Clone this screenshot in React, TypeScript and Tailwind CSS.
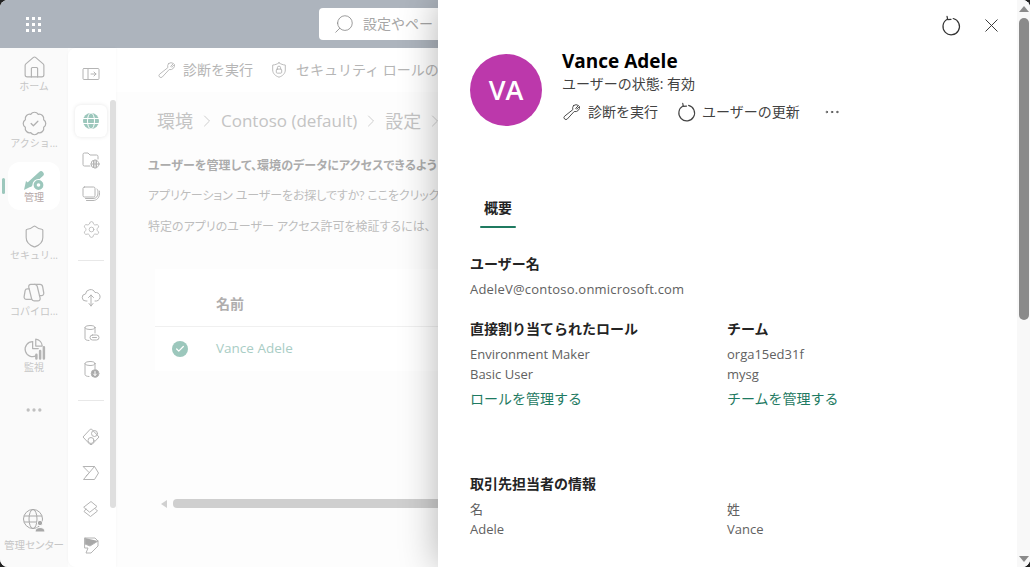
import React from 'react';
import { Home, BadgeCheck, Shield, Settings, X, Search, ChevronRight, Check, MoreHorizontal } from 'lucide-react';

const FONT = "font-['Open_Sans','Noto_Sans_CJK_JP',sans-serif]";

// small inline icons for the ones lucide has no match for
const Svg = ({ size = 20, color = '#b4b4b4', children }: { size?: number; color?: string; children: React.ReactNode }) => (
  <svg width={size} height={size} viewBox="0 0 20 20" fill="none" stroke={color} strokeWidth="1" strokeLinecap="round" strokeLinejoin="round">
    {children}
  </svg>
);

const Refresh = ({ color = '#333', size = 20 }: { color?: string; size?: number }) => (
  <Svg size={size} color={color}>
    <path d="M12 3.2A7.500 7.500 0 1 1 6.600 3.900" strokeWidth="1.100" />
    <path d="M6.400 1.200 7 4.200 10 3.900" strokeWidth="1.100" />
  </Svg>
);

const Key = ({ color = '#444', size = 20 }: { color?: string; size?: number }) => (
  <Svg size={size} color={color}>
    <path d="M12.200 2.600a4.600 4.600 0 0 1 5.200 0l-3 3 1 1 3-3a4.600 4.600 0 0 1-5.600 5.400L5.600 16.800a2 2 0 0 1-2.900-2.900L11.400 7a4.600 4.600 0 0 1 .8-4.400z" />
  </Svg>
);

const Sub = ({ children, cls = 'h-9' }: { children: React.ReactNode; cls?: string }) => (
  <div className={`flex items-center justify-center w-full ${cls}`}>{children}</div>
);

const RailLabel = ({ children }: { children: React.ReactNode }) => (
  <span className="text-[10px] leading-3 text-[#c6c6c6] whitespace-nowrap">{children}</span>
);

const FieldHead = ({ children }: { children: React.ReactNode }) => (
  <div className="h-5 text-sm leading-5 font-semibold text-[#242424]">{children}</div>
);

const Value = ({ children }: { children: React.ReactNode }) => (
  <div className="h-5 text-[13px] leading-5 text-[#616161]">{children}</div>
);

export default function App() {
  return (
    <div className={`w-[1030px] h-[567px] bg-[#222] ${FONT}`}>
      <div className="relative w-full h-full rounded-lg overflow-hidden flex flex-col bg-[#fdfdfd]">
        {/* top bar */}
        <header className="h-12 shrink-0 bg-[#adb4bd] flex items-center pl-[26px]">
          <div className="grid grid-cols-3 gap-[3px]">
            {Array.from({ length: 9 }).map((_, i) => (
              <span key={i} className="w-[3px] h-[3px] bg-white" />
            ))}
          </div>
          <div className="ml-[278px] w-[200px] h-8 bg-white rounded flex items-center pl-[14px] gap-[8px] text-sm text-[#a6a6a6] whitespace-nowrap">
            <Search size={22} strokeWidth={0.9} color="#888" className="-scale-x-100" />
            設定やペー
          </div>
        </header>

        <div className="flex-1 flex min-h-0">
          {/* left rail */}
          <nav className="w-[68px] shrink-0 bg-[#fafafa] flex flex-col items-center pt-[7px]">
            <div className="h-[55px] w-full flex flex-col items-center">
              <Home size={25} strokeWidth={1.100} color="#b0b0b0" />
              <RailLabel>ホーム</RailLabel>
            </div>
            <div className="h-[52px] w-full flex flex-col items-center">
              <BadgeCheck size={27} strokeWidth={1.100} color="#b0b0b0" />
              <RailLabel>アクショ...</RailLabel>
            </div>
            <div className="relative w-full flex justify-center mb-[14px]">
              <span className="absolute left-[2px] top-4 w-[3px] h-4 rounded bg-[#9cc7bc]" />
              <div className="w-[52px] h-12 rounded-xl bg-white flex flex-col items-center justify-center">
                <svg width="22" height="21" viewBox="0 0 22 21">
                  <path d="M18 4 7 14" stroke="#9cc7bc" strokeWidth="5.500" strokeLinecap="round" />
                  <path d="M1 20 3 11l6 5z" fill="#9cc7bc" />
                  <circle cx="15.500" cy="15" r="5.500" fill="#9cc7bc" stroke="#fff" strokeWidth="1.200" />
                  <circle cx="15.500" cy="15" r="1.800" fill="#fff" />
                </svg>
                <span className="text-[10px] leading-3 text-[#b5a8a8]">管理</span>
              </div>
            </div>
            <div className="h-[56px] w-full flex flex-col items-center">
              <Shield size={25} strokeWidth={1.100} color="#b0b0b0" />
              <RailLabel>セキュリ...</RailLabel>
            </div>
            <div className="h-[56px] w-full flex flex-col items-center">
              <Svg size={25}>
                <path d="M7 3.500h3.200c1 0 1.800.7 2 1.600l2.300 9.400c.3 1.200-.6 2.200-1.800 2.200h-3c-1 0-1.800-.7-2-1.600L5.400 5.700C5.200 4.500 5.900 3.500 7 3.500z" />
                <path d="M10 3.500h4.500c1 0 1.800.8 2 1.800l.9 5c.2 1.200-.7 2.200-1.900 2.200H14" />
                <path d="M5.600 7H4.200c-.9 0-1.500.6-1.700 1.500l-.8 4.800c-.2 1.200.7 2.200 1.900 2.200h4.200" />
              </Svg>
              <RailLabel>コパイロ...</RailLabel>
            </div>
            <div className="h-[56px] w-full flex flex-col items-center">
              <Svg size={25}>
                <path d="M8.500 4.500a6 6 0 1 0 3 11.200" />
                <path d="M11 2.500a6 6 0 0 1 5.200 5.500H11z" />
                <path d="M8.500 4.500V10H13" />
                <path d="M11.500 18v-3M14.500 18v-6M17.500 18V9" strokeWidth="2" />
              </Svg>
              <RailLabel>監視</RailLabel>
            </div>
            <MoreHorizontal size={20} strokeWidth={2} color="#c0c0c0" className="mt-[8px]" />
            <div className="mt-auto pb-[14px] flex flex-col items-center">
              <svg width="24" height="24" viewBox="0 0 24 24" fill="none" stroke="#a8a8a8" strokeWidth="1">
                <circle cx="11" cy="11" r="9.500" />
                <ellipse cx="11" cy="11" rx="4" ry="9.500" />
                <path d="M2 8h18M2 14h18" />
                <circle cx="18" cy="15" r="2.700" fill="#a8a8a8" stroke="#fafafa" />
                <path d="M13 24c0-3 2-4.500 5-4.500s5 1.500 5 4.500z" fill="#a8a8a8" stroke="#fafafa" />
              </svg>
              <span className="text-[10.500px] leading-4 mt-[5px] text-[#c6c6c6] whitespace-nowrap [font-feature-settings:'palt']">管理センター</span>
            </div>
          </nav>

          {/* second rail */}
          <aside className="relative w-12 shrink-0 bg-white rounded-l-lg pr-[2px] flex flex-col items-center pt-[8px] shadow-[0_0_3px_rgba(0,0,0,0.04)]">
            <span className="absolute right-0 top-[52px] bottom-[59px] w-[6px] rounded bg-[#dfdfdf]" />
            <Sub cls="h-9">
              <Svg size={20}>
                <rect x="2" y="4.500" width="16" height="11" rx="1" />
                <path d="M7 4.500v11M10 10h5M13 8l2 2-2 2" />
              </Svg>
            </Sub>
            <div className="mt-[13px] w-8 h-8 rounded-md bg-white shadow-[0_0_4px_rgba(0,0,0,0.1)] flex items-center justify-center">
              <svg width="18" height="18" viewBox="0 0 18 18" fill="none">
                <circle cx="9" cy="9" r="8" fill="#9cc7bc" />
                <ellipse cx="9" cy="9" rx="3.500" ry="8" stroke="#fff" />
                <path d="M1 6.500h16M1 11.500h16" stroke="#fff" />
              </svg>
            </div>
            <Sub cls="h-9 mt-[5px]">
              <Svg size={20}>
                <path d="M9 16H3.500A1.500 1.500 0 0 1 2 14.500v-10A1.500 1.500 0 0 1 3.500 3H7l2 2h6.500A1.500 1.500 0 0 1 17 6.500V9" />
                <circle cx="14" cy="14" r="4" />
                <path d="M10 14h8M14 10v8M12.500 10.500v7M15.500 10.500v7" />
              </Svg>
            </Sub>
            <Sub cls="h-[32px]">
              <Svg size={20}>
                <rect x="2" y="3" width="12" height="10" rx="1.500" />
                <path d="M16 5c.8 1 1 2 1 4 0 3-1.500 5.500-5 5.500H4.500" />
                <path d="M18.300 7c.3 1 .3 2 .2 3-.4 4-3 6.500-6.500 6.500H5.500" />
              </Svg>
            </Sub>
            <Sub cls="h-9 mt-[1px]">
              <Settings size={19} strokeWidth={1} color="#b4b4b4" />
            </Sub>
            <div className="w-[26px] h-px bg-[#e8e8e8] mt-[13px] mb-[18px]" />
            <Sub cls="h-9">
              <Svg size={20}>
                <path d="M6 14H5a3.500 3.500 0 0 1-.5-7A5 5 0 0 1 14 5.500a3.800 3.800 0 0 1 1.500 8.500H14" />
                <path d="M10 19V8M7.500 10.500 10 8l2.500 2.500M8 16.500l2 2.500 2-2.500" />
              </Svg>
            </Sub>
            <Sub cls="h-9">
              <Svg size={20}>
                <ellipse cx="9" cy="4.500" rx="5" ry="2" />
                <path d="M4 4.500v11c0 1 1.500 2 4 2M14 4.500V10" />
                <rect x="9" y="12" width="9" height="5" rx="2.500" />
                <path d="M11.500 14.500h4" />
              </Svg>
            </Sub>
            <Sub cls="h-9">
              <Svg size={20}>
                <ellipse cx="9" cy="4.500" rx="5" ry="2" />
                <path d="M4 4.500v11c0 1 1.500 2 4 2M14 4.500V10" />
                <circle cx="14" cy="14.500" r="3.800" fill="#a8a8a8" />
                <path d="M14 12.500v4M12.500 15l1.500 1.500 1.500-1.500" stroke="#fff" />
              </Svg>
            </Sub>
            <div className="w-[26px] h-px bg-[#e8e8e8] mt-[13px] mb-[18px]" />
            <Sub cls="h-9">
              <Svg size={20}>
                <path d="M9 2.500 2 10l7 7.500h2L18 10l-7-7.500z" />
                <circle cx="13.500" cy="6.500" r="3" />
                <circle cx="10" cy="13.500" r="3" />
              </Svg>
            </Sub>
            <Sub cls="h-9">
              <Svg size={20}>
                <path d="M2.500 3.500h11l4 6.500-4 6.500h-11L8 10z" />
                <path d="M13.500 3.500 8 10l-3 3" />
              </Svg>
            </Sub>
            <Sub cls="h-9">
              <Svg size={20}>
                <path d="M3 8l7-5.500 6 5-7 5.500z" />
                <path d="M5 10 3 12.500l6.500 5 7-5.500-2.500-2.500" />
              </Svg>
            </Sub>
            <Sub cls="h-9">
              <Svg size={20}>
                <path d="M4 3h10l3 3v5l-7 7H5l2-5H4z" />
                <path d="M4 3v6l5 2 8-5" fill="#a8a8a8" />
              </Svg>
            </Sub>
          </aside>

          {/* page behind the panel, its text stops where the panel starts */}
          <main className="flex-1 min-w-0 flex flex-col overflow-hidden whitespace-nowrap">
            <div className="h-[44px] shrink-0 bg-white flex items-center pl-[41px] text-sm text-[#b5b5b5]">
              <Key color="#b8b8b8" size={19} />
              <span className="ml-[7px]">診断を実行</span>
              <span className="ml-[17px]">
                <Svg size={18}>
                  <path d="M10 2c2 1.500 4.500 2.300 7 2.500V10c0 3.800-2.800 6.500-7 8-4.200-1.500-7-4.200-7-8V4.500C5.500 4.300 8 3.500 10 2z" />
                  <rect x="7" y="9" width="6" height="4.500" rx="1" />
                  <path d="M8.200 9V7.500a1.800 1.800 0 0 1 3.600 0V9" />
                </Svg>
              </span>
              <span className="ml-[8px]">セキュリティ ロールの</span>
            </div>
            <div className="mt-[16px] ml-[41px] h-[26px] flex items-center gap-[4px] text-[17px] text-[#c4c4c4]">
              <span className="text-[18px]">環境</span>
              <ChevronRight size={20} strokeWidth={1} />
              Contoso (default)
              <ChevronRight size={20} strokeWidth={1} />
              <span className="text-[18px]">設定</span>
              <ChevronRight size={20} strokeWidth={1} />
            </div>
            <div className="ml-[32px] mt-[22px] text-xs [font-feature-settings:'palt'] text-[#bdbdbd]">
              <div className="h-[30px] leading-[20px] font-semibold text-[#acacac] tracking-[0.1px]">ユーザーを管理して、環境のデータにアクセスできるよう</div>
              <div className="h-[31px] leading-[20px] tracking-[-0.1px]">アプリケーション ユーザーをお探しですか? ここをクリックし</div>
              <div className="h-[20px] leading-[20px]">特定のアプリのユーザー アクセス許可を検証するには、</div>
            </div>
            <div className="mt-[32px] ml-[39px] w-[400px] bg-white text-sm">
              <div className="h-[58px] border-b border-[#f0f0f0] flex items-center pl-[61px] pt-[13px] font-semibold text-sm text-[#b0aeae]">名前</div>
              <div className="h-[44px] flex items-center text-[#a9cdc5]">
                <span className="ml-[17px] w-4 h-4 rounded-full bg-[#9cc7bc] flex items-center justify-center">
                  <Check size={10} strokeWidth={3} color="#fff" />
                </span>
                <span className="ml-[28px] text-[13.500px]">Vance Adele</span>
              </div>
            </div>
            <div className="mt-[128px] ml-[39px] flex items-center gap-[6px]">
              <span className="ml-[6px] w-0 h-0 border-y-[4px] border-y-transparent border-r-[6px] border-r-[#d0d0d0]" />
              <span className="w-[300px] h-[9px] rounded bg-[#cfcfcf]" />
            </div>
          </main>
        </div>

        {/* user detail panel */}
        <section className="absolute top-0 right-0 bottom-0 w-[592px] flex bg-white shadow-[0_0_36px_rgba(0,0,0,0.3)]">
          <div className="relative flex-1 min-w-0 pl-8 pt-[49px] overflow-hidden">
            <div className="absolute top-[14px] right-[14px] flex items-center gap-[18px]">
              <Refresh size={22} />
              <X size={23} strokeWidth={1} color="#333" />
            </div>

            <div className="flex">
              <div className="mt-[5px] w-[72px] h-[72px] rounded-full bg-[#bc38ab] flex items-center justify-center text-white text-[27px] font-semibold">VA</div>
              <div className="ml-5">
                <h1 className="h-6 text-[19px] leading-6 font-bold text-black">Vance Adele</h1>
                <div className="h-[22px] text-sm leading-[22px] text-[#424242]">ユーザーの状態: 有効</div>
                <div className="mt-[5px] h-[24px] flex items-center text-sm text-[#424242]">
                  <Key size={19} />
                  <span className="ml-[7px]">診断を実行</span>
                  <span className="ml-[18px]"><Refresh size={21} color="#444" /></span>
                  <span className="ml-[5px]">ユーザーの更新</span>
                  <MoreHorizontal size={18} strokeWidth={1} color="#333" className="ml-[23px]" />
                </div>
              </div>
            </div>

            <div className="mt-[72px] ml-[10px] w-9">
              <div className="px-1 h-7 text-sm leading-5 font-semibold text-[#242424] whitespace-nowrap">概要</div>
              <div className="h-[2px] w-9 rounded bg-[#1f7a60]" />
            </div>

            <div className="mt-[26px]">
              <FieldHead>ユーザー名</FieldHead>
              <div className="mt-[5px]"><Value><span className="tracking-[0.2px]">AdeleV@contoso.onmicrosoft.com</span></Value></div>
            </div>

            <div className="mt-[20px] grid grid-cols-[257px_1fr]">
              <div>
                <FieldHead>直接割り当てられたロール</FieldHead>
                <div className="mt-[5px]"><Value>Environment Maker</Value></div>
                <Value>Basic User</Value>
                <div className="mt-[5px] h-5 text-sm leading-5 text-[#1e7a62]">ロールを管理する</div>
              </div>
              <div>
                <FieldHead>チーム</FieldHead>
                <div className="mt-[5px]"><Value>orga15ed31f</Value></div>
                <Value>mysg</Value>
                <div className="mt-[5px] h-5 text-sm leading-5 text-[#1e7a62]">チームを管理する</div>
              </div>
            </div>

            <div className="mt-[65px]">
              <FieldHead>取引先担当者の情報</FieldHead>
              <div className="mt-[5px] grid grid-cols-[257px_1fr]">
                <div><Value>名</Value><Value>Adele</Value></div>
                <div><Value>姓</Value><Value>Vance</Value></div>
              </div>
            </div>
          </div>

          {/* panel scrollbar */}
          <div className="w-[13px] shrink-0 bg-[#f8f8f8] flex flex-col items-center">
            <span className="mt-[6px] w-0 h-0 border-x-[5px] border-x-transparent border-b-[6px] border-b-[#8a8a8a]" />
            <span className="mt-[6px] w-[10px] h-[302px] rounded-[5px] bg-[#8a8a8a]" />
            <span className="mt-auto mb-[5px] w-0 h-0 border-x-[5px] border-x-transparent border-t-[6px] border-t-[#8a8a8a]" />
          </div>
        </section>
      </div>
    </div>
  );
}
